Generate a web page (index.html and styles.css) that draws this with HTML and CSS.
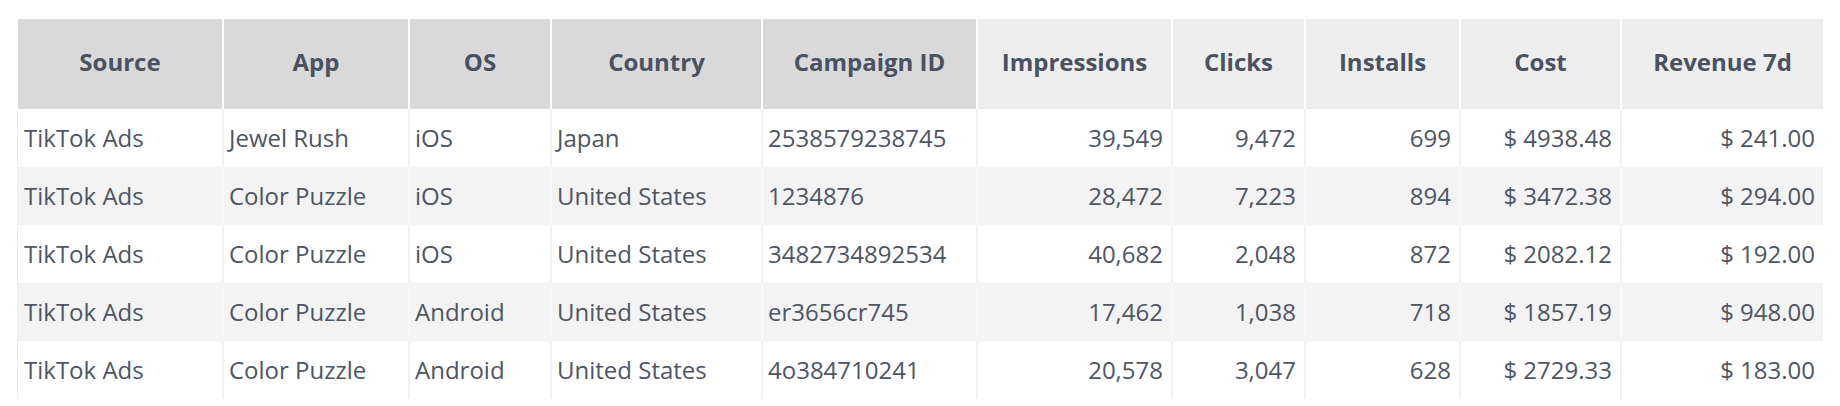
FILE: index.html
```html
<!DOCTYPE html>
<html lang="en">
<head>
<meta charset="utf-8">
<title>Campaign report</title>
<link rel="stylesheet" href="styles.css">
</head>
<body>
<div class="page">
  <table class="grid">
    <colgroup>
      <col class="c-source">
      <col class="c-app">
      <col class="c-os">
      <col class="c-country">
      <col class="c-campaign">
      <col class="c-impr">
      <col class="c-clicks">
      <col class="c-installs">
      <col class="c-cost">
      <col class="c-rev">
    </colgroup>
    <thead>
      <tr>
        <th class="dim">Source</th>
        <th class="dim">App</th>
        <th class="dim">OS</th>
        <th class="dim">Country</th>
        <th class="dim">Campaign ID</th>
        <th class="metric">Impressions</th>
        <th class="metric">Clicks</th>
        <th class="metric">Installs</th>
        <th class="metric">Cost</th>
        <th class="metric">Revenue 7d</th>
      </tr>
    </thead>
    <tbody>
      <tr>
        <td>TikTok Ads</td><td>Jewel Rush</td><td>iOS</td><td>Japan</td><td>2538579238745</td>
        <td class="num">39,549</td><td class="num">9,472</td><td class="num">699</td><td class="num">$ 4938.48</td><td class="num">$ 241.00</td>
      </tr>
      <tr>
        <td>TikTok Ads</td><td>Color Puzzle</td><td>iOS</td><td>United States</td><td>1234876</td>
        <td class="num">28,472</td><td class="num">7,223</td><td class="num">894</td><td class="num">$ 3472.38</td><td class="num">$ 294.00</td>
      </tr>
      <tr>
        <td>TikTok Ads</td><td>Color Puzzle</td><td>iOS</td><td>United States</td><td>3482734892534</td>
        <td class="num">40,682</td><td class="num">2,048</td><td class="num">872</td><td class="num">$ 2082.12</td><td class="num">$ 192.00</td>
      </tr>
      <tr>
        <td>TikTok Ads</td><td>Color Puzzle</td><td>Android</td><td>United States</td><td>er3656cr745</td>
        <td class="num">17,462</td><td class="num">1,038</td><td class="num">718</td><td class="num">$ 1857.19</td><td class="num">$ 948.00</td>
      </tr>
      <tr>
        <td>TikTok Ads</td><td>Color Puzzle</td><td>Android</td><td>United States</td><td>4o384710241</td>
        <td class="num">20,578</td><td class="num">3,047</td><td class="num">628</td><td class="num">$ 2729.33</td><td class="num">$ 183.00</td>
      </tr>
    </tbody>
  </table>
</div>
</body>
</html>
```

FILE: styles.css
```css
* { box-sizing: border-box; }

html, body {
  margin: 0;
  padding: 0;
  background: #ffffff;
}

body {
  font-family: "Open Sans", "Liberation Sans", sans-serif;
  color: #4c5361;
}

.page {
  padding: 19px 17px 0 17px;
}

.grid {
  width: 1806px;
  table-layout: fixed;
  border-collapse: separate;
  border-spacing: 0;
}

.c-source   { width: 205px; }
.c-app      { width: 186px; }
.c-os       { width: 142px; }
.c-country  { width: 211px; }
.c-campaign { width: 215px; }
.c-impr     { width: 195px; }
.c-clicks   { width: 133px; }
.c-installs { width: 155px; }
.c-cost     { width: 161px; }
.c-rev      { width: 203px; }

.grid th {
  height: 90px;
  padding: 0 6px 5px 6px;
  font-size: 24px;
  font-weight: 700;
  color: #4a5160;
  text-align: center;
  vertical-align: middle;
  border-left: 2px solid #ffffff;
  white-space: nowrap;
}

.grid th:first-child {
  border-left: 1px solid #ffffff;
}

.grid th.dim { background: #d9d9d9; }
.grid th.metric { background: #eeeeee; }

.grid td {
  height: 58px;
  padding: 0 8px 1px 5px;
  font-size: 24px;
  font-weight: 400;
  color: #4e5563;
  vertical-align: middle;
  white-space: nowrap;
  border-left: 2px solid #f1f1f1;
  background: #ffffff;
}

.grid td:first-child {
  border-left: 1px solid #eeeeee;
  padding-left: 6px;
}

.grid tbody tr:nth-child(even) td {
  background: #f3f3f3;
  border-left-color: #f8f8f8;
}

.grid tbody tr:nth-child(even) td:first-child {
  border-left-color: #eeeeee;
}

.grid td.num {
  text-align: right;
}
```
